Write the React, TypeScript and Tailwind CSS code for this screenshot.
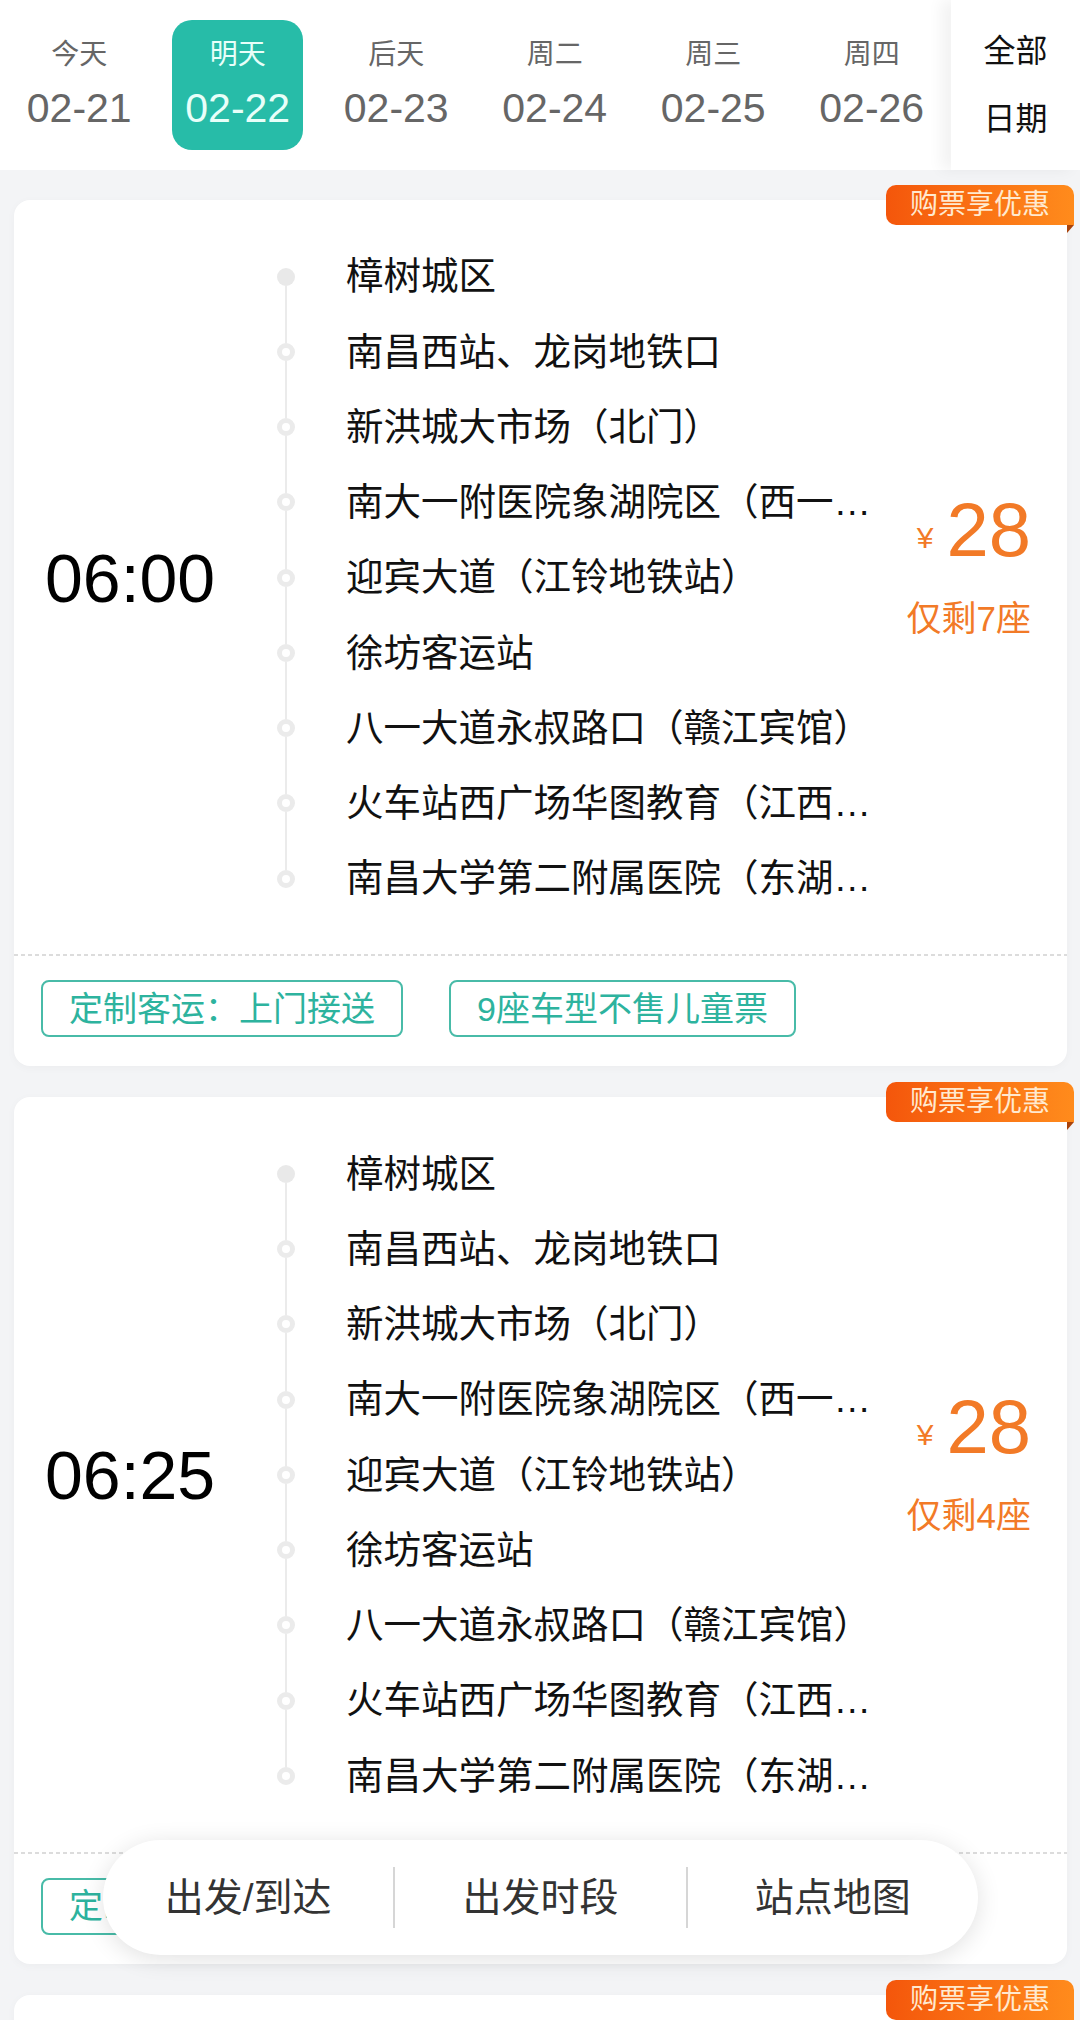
import React from 'react';

const days = [
  { label: '今天', date: '02-21' },
  { label: '明天', date: '02-22' },
  { label: '后天', date: '02-23' },
  { label: '周二', date: '02-24' },
  { label: '周三', date: '02-25' },
  { label: '周四', date: '02-26' },
];

const stations = [
  '樟树城区',
  '南昌西站、龙岗地铁口',
  '新洪城大市场（北门）',
  '南大一附医院象湖院区（西一门）',
  '迎宾大道（江铃地铁站）',
  '徐坊客运站',
  '八一大道永叔路口（赣江宾馆）',
  '火车站西广场华图教育（江西师大）',
  '南昌大学第二附属医院（东湖院区）',
];

const trips = [
  { time: '06:00', price: 28, seats: 7 },
  { time: '06:25', price: 28, seats: 4 },
  { time: '06:50', price: 28, seats: 6 },
];

const font = "font-['Liberation_Sans','Noto_Sans_CJK_SC',sans-serif]";

function DateBar() {
  const selected = 1;
  return (
    <div className="flex h-[170px] bg-white">
      <div className="flex flex-1">
        {days.map((d, i) => (
          <div key={d.date} className="flex w-[158.5px] items-center justify-center">
            <div
              className={
                'flex h-[130px] w-[131px] flex-col items-center justify-center rounded-[20px] ' +
                (i === selected ? 'bg-[#27bca8] text-[#e8fff9]' : 'text-[#666]')
              }
            >
              <span className="text-[28px] leading-none">{d.label}</span>
              <span className="mt-[19px] text-[41px] leading-none">{d.date}</span>
            </div>
          </div>
        ))}
      </div>
      <div className="flex w-[129px] flex-col items-center justify-center text-[32px] leading-[68px] text-[#111] shadow-[-10px_0_14px_rgba(0,0,0,0.05)]">
        <span>全部</span>
        <span>日期</span>
      </div>
    </div>
  );
}

function Badge() {
  return (
    <div className="absolute -right-[7px] -top-[15px] flex h-[40px] items-center rounded-[10px] rounded-br-none bg-gradient-to-r from-[#f4560b] to-[#ff8b1c] px-[24px] text-[28px] leading-none text-[#ffe9cf]">
      购票享优惠
      <span className="absolute right-0 top-full h-0 w-0 border-r-[7px] border-t-[8px] border-r-transparent border-t-[#a9430b]" />
    </div>
  );
}

function Trip({ time, price, seats }: { time: string; price: number; seats: number }) {
  return (
    <div className="relative ml-[14px] mr-[13px] rounded-[16px] bg-white shadow-[0_2px_10px_rgba(0,0,0,0.03)]">
      <Badge />
      <div className="flex pb-[38px] pl-[31px] pr-[36px] pt-[39px]">
        <div className="flex w-[232px] items-center">
          <span className="text-[68px] leading-none text-black">{time}</span>
        </div>
        <div className="flex flex-col">
          {stations.map((s, i) => (
            <div key={s} className="flex h-[75.25px]">
              <div className="flex w-[18px] flex-col items-center">
                <div className={'w-[2px] flex-1 ' + (i > 0 ? 'bg-[#ebebeb]' : '')} />
                {i === 0 ? (
                  <div className="h-[18px] w-[18px] rounded-full bg-[#e9e9e9]" />
                ) : (
                  <div className="h-[18px] w-[18px] rounded-full border-[5px] border-[#ebebeb] bg-white" />
                )}
                <div className={'w-[2px] flex-1 ' + (i < stations.length - 1 ? 'bg-[#ebebeb]' : '')} />
              </div>
              <div className="ml-[51px] w-[540px] self-center truncate text-[37.5px] leading-[1.3] text-[#111]">
                {s}
              </div>
            </div>
          ))}
        </div>
        <div className="-mt-[27px] ml-auto flex flex-col items-end self-center text-[#f27a27]">
          <div className="flex items-baseline">
            <span className="-translate-y-[8px] text-[30px] leading-none">¥</span>
            <span className="ml-[13px] text-[76px] leading-none">{price}</span>
          </div>
          <span className="mt-[33px] text-[35px] leading-none">仅剩{seats}座</span>
        </div>
      </div>
      <div className="h-[2px] bg-[repeating-linear-gradient(90deg,#dcdcdc_0_4px,transparent_4px_7px)]" />
      <div className="flex gap-[46px] px-[27px] pb-[29px] pt-[24px]">
        <div className="flex h-[57px] items-center rounded-[8px] border-2 border-[#48bba8] px-[26px] text-[34px] leading-none text-[#2db39e]">
          定制客运：上门接送
        </div>
        <div className="flex h-[57px] items-center rounded-[8px] border-2 border-[#48bba8] px-[26px] text-[34px] leading-none text-[#2db39e]">
          9座车型不售儿童票
        </div>
      </div>
    </div>
  );
}

export default function App() {
  return (
    <div className={'relative h-[2020px] overflow-hidden bg-[#f3f4f6] ' + font}>
      <DateBar />
      <div className="flex flex-col gap-[31px] pt-[30px]">
        {trips.map((t) => (
          <Trip key={t.time} {...t} />
        ))}
      </div>
      <div className="absolute bottom-[65px] left-[103px] flex h-[115px] w-[875px] items-center rounded-full bg-white text-[39px] leading-none text-[#333] shadow-[0_4px_24px_rgba(0,0,0,0.12)]">
        <div className="flex flex-1 justify-center">出发/到达</div>
        <div className="h-[61px] w-[2px] bg-[#d6d6d6]" />
        <div className="flex flex-1 justify-center">出发时段</div>
        <div className="h-[61px] w-[2px] bg-[#d6d6d6]" />
        <div className="flex flex-1 justify-center">站点地图</div>
      </div>
    </div>
  );
}
